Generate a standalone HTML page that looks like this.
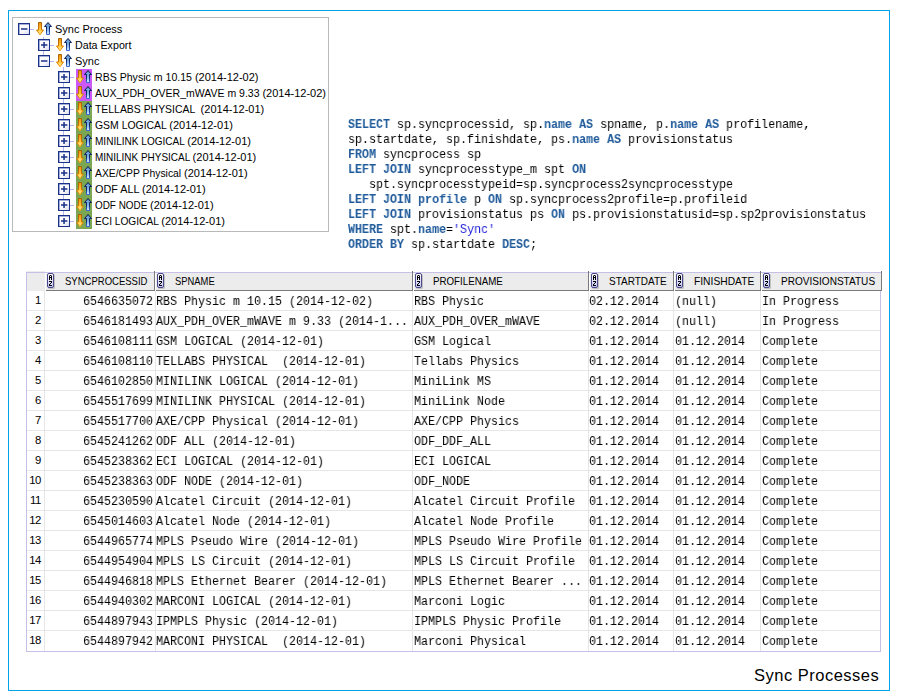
<!DOCTYPE html><html><head><meta charset="utf-8"><style>
*{margin:0;padding:0;box-sizing:border-box}
html,body{width:900px;height:700px;background:#fff;overflow:hidden}
body{position:relative;font-family:"Liberation Sans",sans-serif}
.abs{position:absolute}
.frame{position:absolute;left:8px;top:10px;width:882px;height:681px;border:1px solid #00a2e8}
.tree{position:absolute;left:12px;top:17px;width:317px;height:215px;border:1px solid #b9b9b9}
.tt{position:absolute;transform-origin:0 0;font-size:11px;line-height:16px;height:16px;white-space:pre;color:#000}
.sql{position:absolute;left:348px;font-family:"Liberation Mono",monospace;font-size:13px;transform:scaleX(0.8974);transform-origin:0 0;will-change:transform;line-height:15px;white-space:pre;color:#000}
.kw{color:#1f5a9a;font-weight:bold}
.str{color:#2323d8}
.hd{position:absolute;top:272px;height:19px;background:#ececec}
.ht{position:absolute;transform-origin:0 0;top:272px;font-size:11px;line-height:19px;white-space:pre;color:#000}
.bt{position:absolute;font-family:"Liberation Mono",monospace;font-size:12.5px;transform:scaleX(0.93333);transform-origin:0 0;will-change:transform;line-height:20px;white-space:pre;color:#000}
.rn{position:absolute;font-family:"Liberation Sans",sans-serif;font-size:11.3px;letter-spacing:-0.4px;line-height:20px;text-align:right;width:20px;left:21px;color:#000}
.cap{position:absolute;left:754px;top:662.5px;letter-spacing:0.5px;font-size:16.5px;line-height:24px;color:#000;white-space:pre}
</style></head><body>
<div class="frame"></div>
<div class="tree"></div>
<svg width="0" height="0" style="position:absolute"><defs><linearGradient id="og" x1="0" y1="0" x2="0" y2="1"><stop offset="0" stop-color="#f09000"/><stop offset="0.55" stop-color="#ffc43a"/><stop offset="1" stop-color="#fff59a"/></linearGradient><linearGradient id="ogs" x1="0" y1="0" x2="0" y2="1"><stop offset="0" stop-color="#a86000"/><stop offset="0.6" stop-color="#d07800"/><stop offset="1" stop-color="#ff9a00"/></linearGradient><linearGradient id="blg" x1="0" y1="0" x2="0" y2="1"><stop offset="0" stop-color="#5a90d0"/><stop offset="0.6" stop-color="#8ab8ec"/><stop offset="1" stop-color="#d8ecff"/></linearGradient><linearGradient id="bls" x1="0" y1="0" x2="0" y2="1"><stop offset="0" stop-color="#06123a"/><stop offset="0.55" stop-color="#0e2a70"/><stop offset="1" stop-color="#3a6ad8"/></linearGradient><linearGradient id="bxg" x1="0" y1="0" x2="1" y2="1"><stop offset="0" stop-color="#ffffff"/><stop offset="0.6" stop-color="#f8f8fc"/><stop offset="1" stop-color="#d8dcec"/></linearGradient><linearGradient id="azg" x1="0" y1="0" x2="0" y2="1"><stop offset="0" stop-color="#ffffff"/><stop offset="1" stop-color="#c4c4f0"/></linearGradient></defs></svg>
<div class="abs" style="left:30px;top:29px;width:4px;height:1px;background:#b4b4f0"></div>
<svg class="abs" style="left:18px;top:23px" width="12" height="12" viewBox="0 0 12 12"><rect x="0" y="0" width="12" height="12" fill="#1c3288"/><rect x="1" y="1" width="10" height="10" fill="#6a7cc0"/><rect x="1.6" y="1.6" width="9.4" height="9.4" fill="url(#bxg)"/><rect x="3" y="5.25" width="6.4" height="1.5" fill="#1c3288"/></svg>
<svg class="abs" style="left:36px;top:22px" width="16" height="14" viewBox="0 0 16 14"><path d="M2.5 0.5 H5.5 V8 H7.5 L4 12.8 L0.5 8 H2.5 Z" fill="url(#og)" stroke="url(#ogs)" stroke-width="1" stroke-linejoin="miter"/><path d="M12 0.5 L15.5 4.5 H13.5 V12.5 H10.5 V4.5 H8.5 Z" fill="url(#blg)" stroke="url(#bls)" stroke-width="1" stroke-linejoin="miter"/></svg>
<div class="tt" style="left:55px;top:21px;transform:scaleX(1.0)">Sync Process</div>
<div class="abs" style="left:50px;top:45px;width:4px;height:1px;background:#b4b4f0"></div>
<svg class="abs" style="left:38px;top:39px" width="12" height="12" viewBox="0 0 12 12"><rect x="0" y="0" width="12" height="12" fill="#1c3288"/><rect x="1" y="1" width="10" height="10" fill="#6a7cc0"/><rect x="1.6" y="1.6" width="9.4" height="9.4" fill="url(#bxg)"/><rect x="3" y="5.25" width="6.4" height="1.5" fill="#1c3288"/><rect x="5.3" y="3" width="1.5" height="6" fill="#1c3288"/></svg>
<svg class="abs" style="left:56px;top:38px" width="16" height="14" viewBox="0 0 16 14"><path d="M2.5 0.5 H5.5 V8 H7.5 L4 12.8 L0.5 8 H2.5 Z" fill="url(#og)" stroke="url(#ogs)" stroke-width="1" stroke-linejoin="miter"/><path d="M12 0.5 L15.5 4.5 H13.5 V12.5 H10.5 V4.5 H8.5 Z" fill="url(#blg)" stroke="url(#bls)" stroke-width="1" stroke-linejoin="miter"/></svg>
<div class="tt" style="left:75px;top:37px;transform:scaleX(0.97)">Data Export</div>
<div class="abs" style="left:50px;top:61px;width:4px;height:1px;background:#b4b4f0"></div>
<svg class="abs" style="left:38px;top:55px" width="12" height="12" viewBox="0 0 12 12"><rect x="0" y="0" width="12" height="12" fill="#1c3288"/><rect x="1" y="1" width="10" height="10" fill="#6a7cc0"/><rect x="1.6" y="1.6" width="9.4" height="9.4" fill="url(#bxg)"/><rect x="3" y="5.25" width="6.4" height="1.5" fill="#1c3288"/></svg>
<svg class="abs" style="left:56px;top:54px" width="16" height="14" viewBox="0 0 16 14"><path d="M2.5 0.5 H5.5 V8 H7.5 L4 12.8 L0.5 8 H2.5 Z" fill="url(#og)" stroke="url(#ogs)" stroke-width="1" stroke-linejoin="miter"/><path d="M12 0.5 L15.5 4.5 H13.5 V12.5 H10.5 V4.5 H8.5 Z" fill="url(#blg)" stroke="url(#bls)" stroke-width="1" stroke-linejoin="miter"/></svg>
<div class="tt" style="left:75px;top:53px;transform:scaleX(1.0)">Sync</div>
<div class="abs" style="left:76px;top:69px;width:16px;height:16px;background:#cc58f6"></div>
<div class="abs" style="left:70px;top:77px;width:4px;height:1px;background:#b4b4f0"></div>
<svg class="abs" style="left:58px;top:71px" width="12" height="12" viewBox="0 0 12 12"><rect x="0" y="0" width="12" height="12" fill="#1c3288"/><rect x="1" y="1" width="10" height="10" fill="#6a7cc0"/><rect x="1.6" y="1.6" width="9.4" height="9.4" fill="url(#bxg)"/><rect x="3" y="5.25" width="6.4" height="1.5" fill="#1c3288"/><rect x="5.3" y="3" width="1.5" height="6" fill="#1c3288"/></svg>
<svg class="abs" style="left:76px;top:70px" width="16" height="14" viewBox="0 0 16 14"><path d="M2.5 0.5 H5.5 V8 H7.5 L4 12.8 L0.5 8 H2.5 Z" fill="url(#og)" stroke="url(#ogs)" stroke-width="1" stroke-linejoin="miter"/><path d="M12 0.5 L15.5 4.5 H13.5 V12.5 H10.5 V4.5 H8.5 Z" fill="url(#blg)" stroke="url(#bls)" stroke-width="1" stroke-linejoin="miter"/></svg>
<div class="tt" style="left:95px;top:69px;transform:scaleX(0.9613)">RBS Physic m 10.15 </div>
<div class="tt" style="left:194.92px;top:69px">(2014-12-02)</div>
<div class="abs" style="left:76px;top:85px;width:16px;height:16px;background:#cc58f6"></div>
<div class="abs" style="left:70px;top:93px;width:4px;height:1px;background:#b4b4f0"></div>
<svg class="abs" style="left:58px;top:87px" width="12" height="12" viewBox="0 0 12 12"><rect x="0" y="0" width="12" height="12" fill="#1c3288"/><rect x="1" y="1" width="10" height="10" fill="#6a7cc0"/><rect x="1.6" y="1.6" width="9.4" height="9.4" fill="url(#bxg)"/><rect x="3" y="5.25" width="6.4" height="1.5" fill="#1c3288"/><rect x="5.3" y="3" width="1.5" height="6" fill="#1c3288"/></svg>
<svg class="abs" style="left:76px;top:86px" width="16" height="14" viewBox="0 0 16 14"><path d="M2.5 0.5 H5.5 V8 H7.5 L4 12.8 L0.5 8 H2.5 Z" fill="url(#og)" stroke="url(#ogs)" stroke-width="1" stroke-linejoin="miter"/><path d="M12 0.5 L15.5 4.5 H13.5 V12.5 H10.5 V4.5 H8.5 Z" fill="url(#blg)" stroke="url(#bls)" stroke-width="1" stroke-linejoin="miter"/></svg>
<div class="tt" style="left:95px;top:85px;transform:scaleX(0.9542)">AUX_PDH_OVER_mWAVE m 9.33 </div>
<div class="tt" style="left:262.42px;top:85px">(2014-12-02)</div>
<div class="abs" style="left:76px;top:101px;width:16px;height:16px;background:#7ba752"></div>
<div class="abs" style="left:70px;top:109px;width:4px;height:1px;background:#b4b4f0"></div>
<svg class="abs" style="left:58px;top:103px" width="12" height="12" viewBox="0 0 12 12"><rect x="0" y="0" width="12" height="12" fill="#1c3288"/><rect x="1" y="1" width="10" height="10" fill="#6a7cc0"/><rect x="1.6" y="1.6" width="9.4" height="9.4" fill="url(#bxg)"/><rect x="3" y="5.25" width="6.4" height="1.5" fill="#1c3288"/><rect x="5.3" y="3" width="1.5" height="6" fill="#1c3288"/></svg>
<svg class="abs" style="left:76px;top:102px" width="16" height="14" viewBox="0 0 16 14"><path d="M2.5 0.5 H5.5 V8 H7.5 L4 12.8 L0.5 8 H2.5 Z" fill="url(#og)" stroke="url(#ogs)" stroke-width="1" stroke-linejoin="miter"/><path d="M12 0.5 L15.5 4.5 H13.5 V12.5 H10.5 V4.5 H8.5 Z" fill="url(#blg)" stroke="url(#bls)" stroke-width="1" stroke-linejoin="miter"/></svg>
<div class="tt" style="left:95px;top:101px;transform:scaleX(0.9474)">TELLABS PHYSICAL  </div>
<div class="tt" style="left:200.62px;top:101px">(2014-12-01)</div>
<div class="abs" style="left:76px;top:117px;width:16px;height:16px;background:#7ba752"></div>
<div class="abs" style="left:70px;top:125px;width:4px;height:1px;background:#b4b4f0"></div>
<svg class="abs" style="left:58px;top:119px" width="12" height="12" viewBox="0 0 12 12"><rect x="0" y="0" width="12" height="12" fill="#1c3288"/><rect x="1" y="1" width="10" height="10" fill="#6a7cc0"/><rect x="1.6" y="1.6" width="9.4" height="9.4" fill="url(#bxg)"/><rect x="3" y="5.25" width="6.4" height="1.5" fill="#1c3288"/><rect x="5.3" y="3" width="1.5" height="6" fill="#1c3288"/></svg>
<svg class="abs" style="left:76px;top:118px" width="16" height="14" viewBox="0 0 16 14"><path d="M2.5 0.5 H5.5 V8 H7.5 L4 12.8 L0.5 8 H2.5 Z" fill="url(#og)" stroke="url(#ogs)" stroke-width="1" stroke-linejoin="miter"/><path d="M12 0.5 L15.5 4.5 H13.5 V12.5 H10.5 V4.5 H8.5 Z" fill="url(#blg)" stroke="url(#bls)" stroke-width="1" stroke-linejoin="miter"/></svg>
<div class="tt" style="left:95px;top:117px;transform:scaleX(0.9473)">GSM LOGICAL </div>
<div class="tt" style="left:169.32px;top:117px">(2014-12-01)</div>
<div class="abs" style="left:76px;top:133px;width:16px;height:16px;background:#7ba752"></div>
<div class="abs" style="left:70px;top:141px;width:4px;height:1px;background:#b4b4f0"></div>
<svg class="abs" style="left:58px;top:135px" width="12" height="12" viewBox="0 0 12 12"><rect x="0" y="0" width="12" height="12" fill="#1c3288"/><rect x="1" y="1" width="10" height="10" fill="#6a7cc0"/><rect x="1.6" y="1.6" width="9.4" height="9.4" fill="url(#bxg)"/><rect x="3" y="5.25" width="6.4" height="1.5" fill="#1c3288"/><rect x="5.3" y="3" width="1.5" height="6" fill="#1c3288"/></svg>
<svg class="abs" style="left:76px;top:134px" width="16" height="14" viewBox="0 0 16 14"><path d="M2.5 0.5 H5.5 V8 H7.5 L4 12.8 L0.5 8 H2.5 Z" fill="url(#og)" stroke="url(#ogs)" stroke-width="1" stroke-linejoin="miter"/><path d="M12 0.5 L15.5 4.5 H13.5 V12.5 H10.5 V4.5 H8.5 Z" fill="url(#blg)" stroke="url(#bls)" stroke-width="1" stroke-linejoin="miter"/></svg>
<div class="tt" style="left:95px;top:133px;transform:scaleX(0.9135)">MINILINK LOGICAL </div>
<div class="tt" style="left:187.32px;top:133px">(2014-12-01)</div>
<div class="abs" style="left:76px;top:149px;width:16px;height:16px;background:#7ba752"></div>
<div class="abs" style="left:70px;top:157px;width:4px;height:1px;background:#b4b4f0"></div>
<svg class="abs" style="left:58px;top:151px" width="12" height="12" viewBox="0 0 12 12"><rect x="0" y="0" width="12" height="12" fill="#1c3288"/><rect x="1" y="1" width="10" height="10" fill="#6a7cc0"/><rect x="1.6" y="1.6" width="9.4" height="9.4" fill="url(#bxg)"/><rect x="3" y="5.25" width="6.4" height="1.5" fill="#1c3288"/><rect x="5.3" y="3" width="1.5" height="6" fill="#1c3288"/></svg>
<svg class="abs" style="left:76px;top:150px" width="16" height="14" viewBox="0 0 16 14"><path d="M2.5 0.5 H5.5 V8 H7.5 L4 12.8 L0.5 8 H2.5 Z" fill="url(#og)" stroke="url(#ogs)" stroke-width="1" stroke-linejoin="miter"/><path d="M12 0.5 L15.5 4.5 H13.5 V12.5 H10.5 V4.5 H8.5 Z" fill="url(#blg)" stroke="url(#bls)" stroke-width="1" stroke-linejoin="miter"/></svg>
<div class="tt" style="left:95px;top:149px;transform:scaleX(0.9056)">MINILINK PHYSICAL </div>
<div class="tt" style="left:192.62px;top:149px">(2014-12-01)</div>
<div class="abs" style="left:76px;top:165px;width:16px;height:16px;background:#7ba752"></div>
<div class="abs" style="left:70px;top:173px;width:4px;height:1px;background:#b4b4f0"></div>
<svg class="abs" style="left:58px;top:167px" width="12" height="12" viewBox="0 0 12 12"><rect x="0" y="0" width="12" height="12" fill="#1c3288"/><rect x="1" y="1" width="10" height="10" fill="#6a7cc0"/><rect x="1.6" y="1.6" width="9.4" height="9.4" fill="url(#bxg)"/><rect x="3" y="5.25" width="6.4" height="1.5" fill="#1c3288"/><rect x="5.3" y="3" width="1.5" height="6" fill="#1c3288"/></svg>
<svg class="abs" style="left:76px;top:166px" width="16" height="14" viewBox="0 0 16 14"><path d="M2.5 0.5 H5.5 V8 H7.5 L4 12.8 L0.5 8 H2.5 Z" fill="url(#og)" stroke="url(#ogs)" stroke-width="1" stroke-linejoin="miter"/><path d="M12 0.5 L15.5 4.5 H13.5 V12.5 H10.5 V4.5 H8.5 Z" fill="url(#blg)" stroke="url(#bls)" stroke-width="1" stroke-linejoin="miter"/></svg>
<div class="tt" style="left:95px;top:165px;transform:scaleX(0.9414)">AXE/CPP Physical </div>
<div class="tt" style="left:184.02px;top:165px">(2014-12-01)</div>
<div class="abs" style="left:76px;top:181px;width:16px;height:16px;background:#7ba752"></div>
<div class="abs" style="left:70px;top:189px;width:4px;height:1px;background:#b4b4f0"></div>
<svg class="abs" style="left:58px;top:183px" width="12" height="12" viewBox="0 0 12 12"><rect x="0" y="0" width="12" height="12" fill="#1c3288"/><rect x="1" y="1" width="10" height="10" fill="#6a7cc0"/><rect x="1.6" y="1.6" width="9.4" height="9.4" fill="url(#bxg)"/><rect x="3" y="5.25" width="6.4" height="1.5" fill="#1c3288"/><rect x="5.3" y="3" width="1.5" height="6" fill="#1c3288"/></svg>
<svg class="abs" style="left:76px;top:182px" width="16" height="14" viewBox="0 0 16 14"><path d="M2.5 0.5 H5.5 V8 H7.5 L4 12.8 L0.5 8 H2.5 Z" fill="url(#og)" stroke="url(#ogs)" stroke-width="1" stroke-linejoin="miter"/><path d="M12 0.5 L15.5 4.5 H13.5 V12.5 H10.5 V4.5 H8.5 Z" fill="url(#blg)" stroke="url(#bls)" stroke-width="1" stroke-linejoin="miter"/></svg>
<div class="tt" style="left:95px;top:181px;transform:scaleX(0.9818)">ODF ALL </div>
<div class="tt" style="left:142.02px;top:181px">(2014-12-01)</div>
<div class="abs" style="left:76px;top:197px;width:16px;height:16px;background:#7ba752"></div>
<div class="abs" style="left:70px;top:205px;width:4px;height:1px;background:#b4b4f0"></div>
<svg class="abs" style="left:58px;top:199px" width="12" height="12" viewBox="0 0 12 12"><rect x="0" y="0" width="12" height="12" fill="#1c3288"/><rect x="1" y="1" width="10" height="10" fill="#6a7cc0"/><rect x="1.6" y="1.6" width="9.4" height="9.4" fill="url(#bxg)"/><rect x="3" y="5.25" width="6.4" height="1.5" fill="#1c3288"/><rect x="5.3" y="3" width="1.5" height="6" fill="#1c3288"/></svg>
<svg class="abs" style="left:76px;top:198px" width="16" height="14" viewBox="0 0 16 14"><path d="M2.5 0.5 H5.5 V8 H7.5 L4 12.8 L0.5 8 H2.5 Z" fill="url(#og)" stroke="url(#ogs)" stroke-width="1" stroke-linejoin="miter"/><path d="M12 0.5 L15.5 4.5 H13.5 V12.5 H10.5 V4.5 H8.5 Z" fill="url(#blg)" stroke="url(#bls)" stroke-width="1" stroke-linejoin="miter"/></svg>
<div class="tt" style="left:95px;top:197px;transform:scaleX(0.9001)">ODF NODE </div>
<div class="tt" style="left:150.02px;top:197px">(2014-12-01)</div>
<div class="abs" style="left:76px;top:213px;width:16px;height:16px;background:#7ba752"></div>
<div class="abs" style="left:70px;top:221px;width:4px;height:1px;background:#b4b4f0"></div>
<svg class="abs" style="left:58px;top:215px" width="12" height="12" viewBox="0 0 12 12"><rect x="0" y="0" width="12" height="12" fill="#1c3288"/><rect x="1" y="1" width="10" height="10" fill="#6a7cc0"/><rect x="1.6" y="1.6" width="9.4" height="9.4" fill="url(#bxg)"/><rect x="3" y="5.25" width="6.4" height="1.5" fill="#1c3288"/><rect x="5.3" y="3" width="1.5" height="6" fill="#1c3288"/></svg>
<svg class="abs" style="left:76px;top:214px" width="16" height="14" viewBox="0 0 16 14"><path d="M2.5 0.5 H5.5 V8 H7.5 L4 12.8 L0.5 8 H2.5 Z" fill="url(#og)" stroke="url(#ogs)" stroke-width="1" stroke-linejoin="miter"/><path d="M12 0.5 L15.5 4.5 H13.5 V12.5 H10.5 V4.5 H8.5 Z" fill="url(#blg)" stroke="url(#bls)" stroke-width="1" stroke-linejoin="miter"/></svg>
<div class="tt" style="left:95px;top:213px;transform:scaleX(0.9245)">ECI LOGICAL </div>
<div class="tt" style="left:161.32px;top:213px">(2014-12-01)</div>
<div class="abs" style="left:43px;top:37px;width:1px;height:2px;background:#b4b4f0"></div>
<div class="abs" style="left:43px;top:51px;width:1px;height:4px;background:#b4b4f0"></div>
<div class="abs" style="left:63px;top:67px;width:1px;height:4px;background:#b4b4f0"></div>
<div class="abs" style="left:63px;top:83px;width:1px;height:4px;background:#b4b4f0"></div>
<div class="abs" style="left:63px;top:99px;width:1px;height:4px;background:#b4b4f0"></div>
<div class="abs" style="left:63px;top:115px;width:1px;height:4px;background:#b4b4f0"></div>
<div class="abs" style="left:63px;top:131px;width:1px;height:4px;background:#b4b4f0"></div>
<div class="abs" style="left:63px;top:147px;width:1px;height:4px;background:#b4b4f0"></div>
<div class="abs" style="left:63px;top:163px;width:1px;height:4px;background:#b4b4f0"></div>
<div class="abs" style="left:63px;top:179px;width:1px;height:4px;background:#b4b4f0"></div>
<div class="abs" style="left:63px;top:195px;width:1px;height:4px;background:#b4b4f0"></div>
<div class="abs" style="left:63px;top:211px;width:1px;height:4px;background:#b4b4f0"></div>
<div class="sql" style="top:117px"><span class="kw">SELECT</span> sp.syncprocessid, sp.<span class="kw">name</span> <span class="kw">AS</span> spname, p.<span class="kw">name</span> <span class="kw">AS</span> profilename,
sp.startdate, sp.finishdate, ps.<span class="kw">name</span> <span class="kw">AS</span> provisionstatus
<span class="kw">FROM</span> syncprocess sp
<span class="kw">LEFT JOIN</span> syncprocesstype_m spt <span class="kw">ON</span>
   spt.syncprocesstypeid=sp.syncprocess2syncprocesstype
<span class="kw">LEFT JOIN</span> <span class="kw">profile</span> p <span class="kw">ON</span> sp.syncprocess2profile=p.profileid
<span class="kw">LEFT JOIN</span> provisionstatus ps <span class="kw">ON</span> ps.provisionstatusid=sp.sp2provisionstatus
<span class="kw">WHERE</span> spt.<span class="kw">name</span>=<span class="str">'Sync'</span>
<span class="kw">ORDER BY</span> sp.startdate <span class="kw">DESC</span>;</div>
<div class="abs" style="left:26px;top:272px;width:1px;height:380px;background:#c6bfe6"></div>
<div class="abs" style="left:26px;top:651px;width:855px;height:1px;background:#c6bfe6"></div>
<div class="abs" style="left:880px;top:272px;width:1px;height:380px;background:#c6bfe6"></div>
<div class="abs" style="left:26px;top:272px;width:854px;height:1px;background:#c6bfe6"></div>
<div class="abs" style="left:26px;top:271px;width:19px;height:1px;background:#ededed"></div>
<div class="hd" style="left:27px;width:18px;top:273px;height:18px"></div>
<div class="hd" style="left:45px;width:109px;top:273px;height:17px"></div>
<div class="abs" style="left:45px;top:273px;width:1px;height:17px;background:#fff"></div>
<div class="abs" style="left:154px;top:271px;width:1px;height:20px;background:#7a7a7a"></div>
<div class="abs" style="left:46px;top:290px;width:109px;height:1px;background:#7a7a7a"></div>
<svg class="abs" style="left:47px;top:273px" width="9" height="17" viewBox="0 0 9 17" shape-rendering="crispEdges"><rect x="1" y="1" width="7" height="15" rx="1.5" fill="#000" opacity="0.18" shape-rendering="auto"/><rect x="0.5" y="0.5" width="6" height="14" rx="1.5" fill="url(#azg)" stroke="#48488a" stroke-width="1" shape-rendering="auto"/><rect x="2" y="2" width="1" height="1" fill="#000" opacity="0.45"/><rect x="4" y="2" width="1" height="1" fill="#000" opacity="0.45"/><rect x="3" y="2" width="1" height="1" fill="#000"/><rect x="2" y="3" width="1" height="1" fill="#000"/><rect x="4" y="3" width="1" height="1" fill="#000"/><rect x="2" y="4" width="1" height="1" fill="#000"/><rect x="3" y="4" width="1" height="1" fill="#000"/><rect x="4" y="4" width="1" height="1" fill="#000"/><rect x="2" y="5" width="1" height="1" fill="#000"/><rect x="4" y="5" width="1" height="1" fill="#000"/><rect x="2" y="6" width="1" height="1" fill="#000"/><rect x="4" y="6" width="1" height="1" fill="#000"/><rect x="2" y="8" width="1" height="1" fill="#000"/><rect x="3" y="8" width="1" height="1" fill="#000"/><rect x="4" y="8" width="1" height="1" fill="#000"/><rect x="4" y="9" width="1" height="1" fill="#000"/><rect x="3" y="10" width="1" height="1" fill="#000"/><rect x="2" y="11" width="1" height="1" fill="#000"/><rect x="2" y="12" width="1" height="1" fill="#000"/><rect x="3" y="12" width="1" height="1" fill="#000"/><rect x="4" y="12" width="1" height="1" fill="#000"/></svg>
<div class="ht" style="left:65px;top:272px;transform:scaleX(0.8648)">SYNCPROCESSID</div>
<div class="hd" style="left:155px;width:257px;top:273px;height:17px"></div>
<div class="abs" style="left:155px;top:273px;width:1px;height:17px;background:#fff"></div>
<div class="abs" style="left:412px;top:271px;width:1px;height:20px;background:#7a7a7a"></div>
<div class="abs" style="left:156px;top:290px;width:257px;height:1px;background:#7a7a7a"></div>
<svg class="abs" style="left:157px;top:273px" width="9" height="17" viewBox="0 0 9 17" shape-rendering="crispEdges"><rect x="1" y="1" width="7" height="15" rx="1.5" fill="#000" opacity="0.18" shape-rendering="auto"/><rect x="0.5" y="0.5" width="6" height="14" rx="1.5" fill="url(#azg)" stroke="#48488a" stroke-width="1" shape-rendering="auto"/><rect x="2" y="2" width="1" height="1" fill="#000" opacity="0.45"/><rect x="4" y="2" width="1" height="1" fill="#000" opacity="0.45"/><rect x="3" y="2" width="1" height="1" fill="#000"/><rect x="2" y="3" width="1" height="1" fill="#000"/><rect x="4" y="3" width="1" height="1" fill="#000"/><rect x="2" y="4" width="1" height="1" fill="#000"/><rect x="3" y="4" width="1" height="1" fill="#000"/><rect x="4" y="4" width="1" height="1" fill="#000"/><rect x="2" y="5" width="1" height="1" fill="#000"/><rect x="4" y="5" width="1" height="1" fill="#000"/><rect x="2" y="6" width="1" height="1" fill="#000"/><rect x="4" y="6" width="1" height="1" fill="#000"/><rect x="2" y="8" width="1" height="1" fill="#000"/><rect x="3" y="8" width="1" height="1" fill="#000"/><rect x="4" y="8" width="1" height="1" fill="#000"/><rect x="4" y="9" width="1" height="1" fill="#000"/><rect x="3" y="10" width="1" height="1" fill="#000"/><rect x="2" y="11" width="1" height="1" fill="#000"/><rect x="2" y="12" width="1" height="1" fill="#000"/><rect x="3" y="12" width="1" height="1" fill="#000"/><rect x="4" y="12" width="1" height="1" fill="#000"/></svg>
<div class="ht" style="left:175px;top:272px;transform:scaleX(0.8538)">SPNAME</div>
<div class="hd" style="left:413px;width:175px;top:273px;height:17px"></div>
<div class="abs" style="left:413px;top:273px;width:1px;height:17px;background:#fff"></div>
<div class="abs" style="left:588px;top:271px;width:1px;height:20px;background:#7a7a7a"></div>
<div class="abs" style="left:414px;top:290px;width:175px;height:1px;background:#7a7a7a"></div>
<svg class="abs" style="left:415px;top:273px" width="9" height="17" viewBox="0 0 9 17" shape-rendering="crispEdges"><rect x="1" y="1" width="7" height="15" rx="1.5" fill="#000" opacity="0.18" shape-rendering="auto"/><rect x="0.5" y="0.5" width="6" height="14" rx="1.5" fill="url(#azg)" stroke="#48488a" stroke-width="1" shape-rendering="auto"/><rect x="2" y="2" width="1" height="1" fill="#000" opacity="0.45"/><rect x="4" y="2" width="1" height="1" fill="#000" opacity="0.45"/><rect x="3" y="2" width="1" height="1" fill="#000"/><rect x="2" y="3" width="1" height="1" fill="#000"/><rect x="4" y="3" width="1" height="1" fill="#000"/><rect x="2" y="4" width="1" height="1" fill="#000"/><rect x="3" y="4" width="1" height="1" fill="#000"/><rect x="4" y="4" width="1" height="1" fill="#000"/><rect x="2" y="5" width="1" height="1" fill="#000"/><rect x="4" y="5" width="1" height="1" fill="#000"/><rect x="2" y="6" width="1" height="1" fill="#000"/><rect x="4" y="6" width="1" height="1" fill="#000"/><rect x="2" y="8" width="1" height="1" fill="#000"/><rect x="3" y="8" width="1" height="1" fill="#000"/><rect x="4" y="8" width="1" height="1" fill="#000"/><rect x="4" y="9" width="1" height="1" fill="#000"/><rect x="3" y="10" width="1" height="1" fill="#000"/><rect x="2" y="11" width="1" height="1" fill="#000"/><rect x="2" y="12" width="1" height="1" fill="#000"/><rect x="3" y="12" width="1" height="1" fill="#000"/><rect x="4" y="12" width="1" height="1" fill="#000"/></svg>
<div class="ht" style="left:433px;top:272px;transform:scaleX(0.8847)">PROFILENAME</div>
<div class="hd" style="left:589px;width:84px;top:273px;height:17px"></div>
<div class="abs" style="left:589px;top:273px;width:1px;height:17px;background:#fff"></div>
<div class="abs" style="left:673px;top:271px;width:1px;height:20px;background:#7a7a7a"></div>
<div class="abs" style="left:590px;top:290px;width:84px;height:1px;background:#7a7a7a"></div>
<svg class="abs" style="left:591px;top:273px" width="9" height="17" viewBox="0 0 9 17" shape-rendering="crispEdges"><rect x="1" y="1" width="7" height="15" rx="1.5" fill="#000" opacity="0.18" shape-rendering="auto"/><rect x="0.5" y="0.5" width="6" height="14" rx="1.5" fill="url(#azg)" stroke="#48488a" stroke-width="1" shape-rendering="auto"/><rect x="2" y="2" width="1" height="1" fill="#000" opacity="0.45"/><rect x="4" y="2" width="1" height="1" fill="#000" opacity="0.45"/><rect x="3" y="2" width="1" height="1" fill="#000"/><rect x="2" y="3" width="1" height="1" fill="#000"/><rect x="4" y="3" width="1" height="1" fill="#000"/><rect x="2" y="4" width="1" height="1" fill="#000"/><rect x="3" y="4" width="1" height="1" fill="#000"/><rect x="4" y="4" width="1" height="1" fill="#000"/><rect x="2" y="5" width="1" height="1" fill="#000"/><rect x="4" y="5" width="1" height="1" fill="#000"/><rect x="2" y="6" width="1" height="1" fill="#000"/><rect x="4" y="6" width="1" height="1" fill="#000"/><rect x="2" y="8" width="1" height="1" fill="#000"/><rect x="3" y="8" width="1" height="1" fill="#000"/><rect x="4" y="8" width="1" height="1" fill="#000"/><rect x="4" y="9" width="1" height="1" fill="#000"/><rect x="3" y="10" width="1" height="1" fill="#000"/><rect x="2" y="11" width="1" height="1" fill="#000"/><rect x="2" y="12" width="1" height="1" fill="#000"/><rect x="3" y="12" width="1" height="1" fill="#000"/><rect x="4" y="12" width="1" height="1" fill="#000"/></svg>
<div class="ht" style="left:609px;top:272px;transform:scaleX(0.9072)">STARTDATE</div>
<div class="hd" style="left:674px;width:86px;top:273px;height:17px"></div>
<div class="abs" style="left:674px;top:273px;width:1px;height:17px;background:#fff"></div>
<div class="abs" style="left:760px;top:271px;width:1px;height:20px;background:#7a7a7a"></div>
<div class="abs" style="left:675px;top:290px;width:86px;height:1px;background:#7a7a7a"></div>
<svg class="abs" style="left:676px;top:273px" width="9" height="17" viewBox="0 0 9 17" shape-rendering="crispEdges"><rect x="1" y="1" width="7" height="15" rx="1.5" fill="#000" opacity="0.18" shape-rendering="auto"/><rect x="0.5" y="0.5" width="6" height="14" rx="1.5" fill="url(#azg)" stroke="#48488a" stroke-width="1" shape-rendering="auto"/><rect x="2" y="2" width="1" height="1" fill="#000" opacity="0.45"/><rect x="4" y="2" width="1" height="1" fill="#000" opacity="0.45"/><rect x="3" y="2" width="1" height="1" fill="#000"/><rect x="2" y="3" width="1" height="1" fill="#000"/><rect x="4" y="3" width="1" height="1" fill="#000"/><rect x="2" y="4" width="1" height="1" fill="#000"/><rect x="3" y="4" width="1" height="1" fill="#000"/><rect x="4" y="4" width="1" height="1" fill="#000"/><rect x="2" y="5" width="1" height="1" fill="#000"/><rect x="4" y="5" width="1" height="1" fill="#000"/><rect x="2" y="6" width="1" height="1" fill="#000"/><rect x="4" y="6" width="1" height="1" fill="#000"/><rect x="2" y="8" width="1" height="1" fill="#000"/><rect x="3" y="8" width="1" height="1" fill="#000"/><rect x="4" y="8" width="1" height="1" fill="#000"/><rect x="4" y="9" width="1" height="1" fill="#000"/><rect x="3" y="10" width="1" height="1" fill="#000"/><rect x="2" y="11" width="1" height="1" fill="#000"/><rect x="2" y="12" width="1" height="1" fill="#000"/><rect x="3" y="12" width="1" height="1" fill="#000"/><rect x="4" y="12" width="1" height="1" fill="#000"/></svg>
<div class="ht" style="left:694px;top:272px;transform:scaleX(0.9334)">FINISHDATE</div>
<div class="hd" style="left:761px;width:120px;top:273px;height:17px"></div>
<div class="abs" style="left:761px;top:273px;width:1px;height:17px;background:#fff"></div>
<div class="abs" style="left:881px;top:271px;width:1px;height:20px;background:#7a7a7a"></div>
<div class="abs" style="left:762px;top:290px;width:120px;height:1px;background:#7a7a7a"></div>
<svg class="abs" style="left:763px;top:273px" width="9" height="17" viewBox="0 0 9 17" shape-rendering="crispEdges"><rect x="1" y="1" width="7" height="15" rx="1.5" fill="#000" opacity="0.18" shape-rendering="auto"/><rect x="0.5" y="0.5" width="6" height="14" rx="1.5" fill="url(#azg)" stroke="#48488a" stroke-width="1" shape-rendering="auto"/><rect x="2" y="2" width="1" height="1" fill="#000" opacity="0.45"/><rect x="4" y="2" width="1" height="1" fill="#000" opacity="0.45"/><rect x="3" y="2" width="1" height="1" fill="#000"/><rect x="2" y="3" width="1" height="1" fill="#000"/><rect x="4" y="3" width="1" height="1" fill="#000"/><rect x="2" y="4" width="1" height="1" fill="#000"/><rect x="3" y="4" width="1" height="1" fill="#000"/><rect x="4" y="4" width="1" height="1" fill="#000"/><rect x="2" y="5" width="1" height="1" fill="#000"/><rect x="4" y="5" width="1" height="1" fill="#000"/><rect x="2" y="6" width="1" height="1" fill="#000"/><rect x="4" y="6" width="1" height="1" fill="#000"/><rect x="2" y="8" width="1" height="1" fill="#000"/><rect x="3" y="8" width="1" height="1" fill="#000"/><rect x="4" y="8" width="1" height="1" fill="#000"/><rect x="4" y="9" width="1" height="1" fill="#000"/><rect x="3" y="10" width="1" height="1" fill="#000"/><rect x="2" y="11" width="1" height="1" fill="#000"/><rect x="2" y="12" width="1" height="1" fill="#000"/><rect x="3" y="12" width="1" height="1" fill="#000"/><rect x="4" y="12" width="1" height="1" fill="#000"/></svg>
<div class="ht" style="left:781px;top:272px;transform:scaleX(0.9145)">PROVISIONSTATUS</div>
<div class="abs" style="left:27px;top:310px;width:853px;height:1px;background:#e6e6e6"></div>
<div class="abs" style="left:27px;top:330px;width:853px;height:1px;background:#e6e6e6"></div>
<div class="abs" style="left:27px;top:350px;width:853px;height:1px;background:#e6e6e6"></div>
<div class="abs" style="left:27px;top:370px;width:853px;height:1px;background:#e6e6e6"></div>
<div class="abs" style="left:27px;top:390px;width:853px;height:1px;background:#e6e6e6"></div>
<div class="abs" style="left:27px;top:410px;width:853px;height:1px;background:#e6e6e6"></div>
<div class="abs" style="left:27px;top:430px;width:853px;height:1px;background:#e6e6e6"></div>
<div class="abs" style="left:27px;top:450px;width:853px;height:1px;background:#e6e6e6"></div>
<div class="abs" style="left:27px;top:470px;width:853px;height:1px;background:#e6e6e6"></div>
<div class="abs" style="left:27px;top:490px;width:853px;height:1px;background:#e6e6e6"></div>
<div class="abs" style="left:27px;top:510px;width:853px;height:1px;background:#e6e6e6"></div>
<div class="abs" style="left:27px;top:530px;width:853px;height:1px;background:#e6e6e6"></div>
<div class="abs" style="left:27px;top:550px;width:853px;height:1px;background:#e6e6e6"></div>
<div class="abs" style="left:27px;top:570px;width:853px;height:1px;background:#e6e6e6"></div>
<div class="abs" style="left:27px;top:590px;width:853px;height:1px;background:#e6e6e6"></div>
<div class="abs" style="left:27px;top:610px;width:853px;height:1px;background:#e6e6e6"></div>
<div class="abs" style="left:27px;top:630px;width:853px;height:1px;background:#e6e6e6"></div>
<div class="abs" style="left:44px;top:291px;width:1px;height:360px;background:#e6e6e6"></div>
<div class="abs" style="left:155px;top:291px;width:1px;height:360px;background:#e6e6e6"></div>
<div class="abs" style="left:412px;top:291px;width:1px;height:360px;background:#e6e6e6"></div>
<div class="abs" style="left:588px;top:291px;width:1px;height:360px;background:#e6e6e6"></div>
<div class="abs" style="left:673px;top:291px;width:1px;height:360px;background:#e6e6e6"></div>
<div class="abs" style="left:760px;top:291px;width:1px;height:360px;background:#e6e6e6"></div>
<div class="rn" style="top:290px">1</div>
<div class="bt" style="left:82.5px;top:292px">6546635072</div>
<div class="bt" style="left:155.8px;top:292px">RBS Physic m 10.15 (2014-12-02)</div>
<div class="bt" style="left:414px;top:292px">RBS Physic</div>
<div class="bt" style="left:589px;top:292px">02.12.2014</div>
<div class="bt" style="left:675px;top:292px">(null)</div>
<div class="bt" style="left:762px;top:292px">In Progress</div>
<div class="rn" style="top:310px">2</div>
<div class="bt" style="left:82.5px;top:312px">6546181493</div>
<div class="bt" style="left:155.8px;top:312px">AUX_PDH_OVER_mWAVE m 9.33 (2014-1...</div>
<div class="bt" style="left:414px;top:312px">AUX_PDH_OVER_mWAVE</div>
<div class="bt" style="left:589px;top:312px">02.12.2014</div>
<div class="bt" style="left:675px;top:312px">(null)</div>
<div class="bt" style="left:762px;top:312px">In Progress</div>
<div class="rn" style="top:330px">3</div>
<div class="bt" style="left:82.5px;top:332px">6546108111</div>
<div class="bt" style="left:155.8px;top:332px">GSM LOGICAL (2014-12-01)</div>
<div class="bt" style="left:414px;top:332px">GSM Logical</div>
<div class="bt" style="left:589px;top:332px">01.12.2014</div>
<div class="bt" style="left:675px;top:332px">01.12.2014</div>
<div class="bt" style="left:762px;top:332px">Complete</div>
<div class="rn" style="top:350px">4</div>
<div class="bt" style="left:82.5px;top:352px">6546108110</div>
<div class="bt" style="left:155.8px;top:352px">TELLABS PHYSICAL  (2014-12-01)</div>
<div class="bt" style="left:414px;top:352px">Tellabs Physics</div>
<div class="bt" style="left:589px;top:352px">01.12.2014</div>
<div class="bt" style="left:675px;top:352px">01.12.2014</div>
<div class="bt" style="left:762px;top:352px">Complete</div>
<div class="rn" style="top:370px">5</div>
<div class="bt" style="left:82.5px;top:372px">6546102850</div>
<div class="bt" style="left:155.8px;top:372px">MINILINK LOGICAL (2014-12-01)</div>
<div class="bt" style="left:414px;top:372px">MiniLink MS</div>
<div class="bt" style="left:589px;top:372px">01.12.2014</div>
<div class="bt" style="left:675px;top:372px">01.12.2014</div>
<div class="bt" style="left:762px;top:372px">Complete</div>
<div class="rn" style="top:390px">6</div>
<div class="bt" style="left:82.5px;top:392px">6545517699</div>
<div class="bt" style="left:155.8px;top:392px">MINILINK PHYSICAL (2014-12-01)</div>
<div class="bt" style="left:414px;top:392px">MiniLink Node</div>
<div class="bt" style="left:589px;top:392px">01.12.2014</div>
<div class="bt" style="left:675px;top:392px">01.12.2014</div>
<div class="bt" style="left:762px;top:392px">Complete</div>
<div class="rn" style="top:410px">7</div>
<div class="bt" style="left:82.5px;top:412px">6545517700</div>
<div class="bt" style="left:155.8px;top:412px">AXE/CPP Physical (2014-12-01)</div>
<div class="bt" style="left:414px;top:412px">AXE/CPP Physics</div>
<div class="bt" style="left:589px;top:412px">01.12.2014</div>
<div class="bt" style="left:675px;top:412px">01.12.2014</div>
<div class="bt" style="left:762px;top:412px">Complete</div>
<div class="rn" style="top:430px">8</div>
<div class="bt" style="left:82.5px;top:432px">6545241262</div>
<div class="bt" style="left:155.8px;top:432px">ODF ALL (2014-12-01)</div>
<div class="bt" style="left:414px;top:432px">ODF_DDF_ALL</div>
<div class="bt" style="left:589px;top:432px">01.12.2014</div>
<div class="bt" style="left:675px;top:432px">01.12.2014</div>
<div class="bt" style="left:762px;top:432px">Complete</div>
<div class="rn" style="top:450px">9</div>
<div class="bt" style="left:82.5px;top:452px">6545238362</div>
<div class="bt" style="left:155.8px;top:452px">ECI LOGICAL (2014-12-01)</div>
<div class="bt" style="left:414px;top:452px">ECI LOGICAL</div>
<div class="bt" style="left:589px;top:452px">01.12.2014</div>
<div class="bt" style="left:675px;top:452px">01.12.2014</div>
<div class="bt" style="left:762px;top:452px">Complete</div>
<div class="rn" style="top:470px">10</div>
<div class="bt" style="left:82.5px;top:472px">6545238363</div>
<div class="bt" style="left:155.8px;top:472px">ODF NODE (2014-12-01)</div>
<div class="bt" style="left:414px;top:472px">ODF_NODE</div>
<div class="bt" style="left:589px;top:472px">01.12.2014</div>
<div class="bt" style="left:675px;top:472px">01.12.2014</div>
<div class="bt" style="left:762px;top:472px">Complete</div>
<div class="rn" style="top:490px">11</div>
<div class="bt" style="left:82.5px;top:492px">6545230590</div>
<div class="bt" style="left:155.8px;top:492px">Alcatel Circuit (2014-12-01)</div>
<div class="bt" style="left:414px;top:492px">Alcatel Circuit Profile</div>
<div class="bt" style="left:589px;top:492px">01.12.2014</div>
<div class="bt" style="left:675px;top:492px">01.12.2014</div>
<div class="bt" style="left:762px;top:492px">Complete</div>
<div class="rn" style="top:510px">12</div>
<div class="bt" style="left:82.5px;top:512px">6545014603</div>
<div class="bt" style="left:155.8px;top:512px">Alcatel Node (2014-12-01)</div>
<div class="bt" style="left:414px;top:512px">Alcatel Node Profile</div>
<div class="bt" style="left:589px;top:512px">01.12.2014</div>
<div class="bt" style="left:675px;top:512px">01.12.2014</div>
<div class="bt" style="left:762px;top:512px">Complete</div>
<div class="rn" style="top:530px">13</div>
<div class="bt" style="left:82.5px;top:532px">6544965774</div>
<div class="bt" style="left:155.8px;top:532px">MPLS Pseudo Wire (2014-12-01)</div>
<div class="bt" style="left:414px;top:532px">MPLS Pseudo Wire Profile</div>
<div class="bt" style="left:589px;top:532px">01.12.2014</div>
<div class="bt" style="left:675px;top:532px">01.12.2014</div>
<div class="bt" style="left:762px;top:532px">Complete</div>
<div class="rn" style="top:550px">14</div>
<div class="bt" style="left:82.5px;top:552px">6544954904</div>
<div class="bt" style="left:155.8px;top:552px">MPLS LS Circuit (2014-12-01)</div>
<div class="bt" style="left:414px;top:552px">MPLS LS Circuit Profile</div>
<div class="bt" style="left:589px;top:552px">01.12.2014</div>
<div class="bt" style="left:675px;top:552px">01.12.2014</div>
<div class="bt" style="left:762px;top:552px">Complete</div>
<div class="rn" style="top:570px">15</div>
<div class="bt" style="left:82.5px;top:572px">6544946818</div>
<div class="bt" style="left:155.8px;top:572px">MPLS Ethernet Bearer (2014-12-01)</div>
<div class="bt" style="left:414px;top:572px">MPLS Ethernet Bearer ...</div>
<div class="bt" style="left:589px;top:572px">01.12.2014</div>
<div class="bt" style="left:675px;top:572px">01.12.2014</div>
<div class="bt" style="left:762px;top:572px">Complete</div>
<div class="rn" style="top:590px">16</div>
<div class="bt" style="left:82.5px;top:592px">6544940302</div>
<div class="bt" style="left:155.8px;top:592px">MARCONI LOGICAL (2014-12-01)</div>
<div class="bt" style="left:414px;top:592px">Marconi Logic</div>
<div class="bt" style="left:589px;top:592px">01.12.2014</div>
<div class="bt" style="left:675px;top:592px">01.12.2014</div>
<div class="bt" style="left:762px;top:592px">Complete</div>
<div class="rn" style="top:610px">17</div>
<div class="bt" style="left:82.5px;top:612px">6544897943</div>
<div class="bt" style="left:155.8px;top:612px">IPMPLS Physic (2014-12-01)</div>
<div class="bt" style="left:414px;top:612px">IPMPLS Physic Profile</div>
<div class="bt" style="left:589px;top:612px">01.12.2014</div>
<div class="bt" style="left:675px;top:612px">01.12.2014</div>
<div class="bt" style="left:762px;top:612px">Complete</div>
<div class="rn" style="top:630px">18</div>
<div class="bt" style="left:82.5px;top:632px">6544897942</div>
<div class="bt" style="left:155.8px;top:632px">MARCONI PHYSICAL  (2014-12-01)</div>
<div class="bt" style="left:414px;top:632px">Marconi Physical</div>
<div class="bt" style="left:589px;top:632px">01.12.2014</div>
<div class="bt" style="left:675px;top:632px">01.12.2014</div>
<div class="bt" style="left:762px;top:632px">Complete</div>
<div class="cap">Sync Processes</div>
</body></html>
